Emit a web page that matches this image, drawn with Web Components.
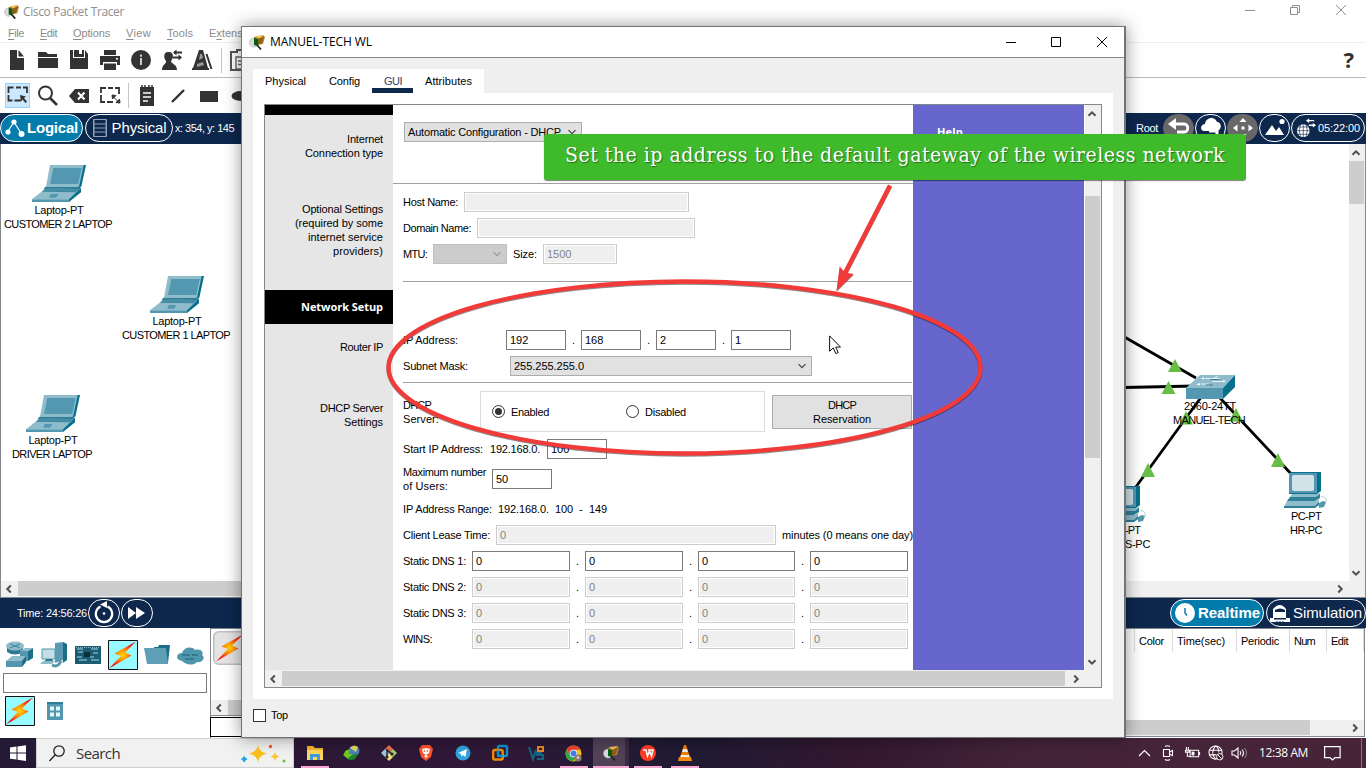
<!DOCTYPE html>
<html lang="en">
<head>
<meta charset="utf-8">
<title>Cisco Packet Tracer</title>
<style>
html,body{margin:0;padding:0}
body{width:1366px;height:768px;overflow:hidden;position:relative;display:flex;flex-direction:column;background:#fff;font:11px/14px "Liberation Sans",Arial,sans-serif;color:#000}
router-dialog{position:absolute;left:241px;top:26px}
callout-note{position:absolute;left:544px;top:134px}
mark-layer{position:absolute;left:0;top:0}
</style>
</head>
<body>
<packet-tracer></packet-tracer>
<task-bar></task-bar>
<router-dialog></router-dialog>
<mark-layer></mark-layer>
<callout-note>Set the ip address to the default gateway of the wireless network</callout-note>
<script>
const def = (name, css, html) => customElements.define(name, class extends HTMLElement {
  connectedCallback() {
    if (this.shadowRoot) return;
    const root = this.attachShadow({mode: 'open'});
    root.innerHTML = `<style>:host,*{box-sizing:border-box}${css}</style>` + (typeof html === 'function' ? html(this) : html);
  }
});

/* ---------- icon set: [viewBox width, viewBox height, markup] ---------- */
const bolt = '<defs><radialGradient id="bg"><stop offset="0" stop-color="#ffd800"/><stop offset=".35" stop-color="#ff9a00"/><stop offset=".75" stop-color="#ff3a10"/><stop offset="1" stop-color="#e81010"/></radialGradient></defs><path d="M28 1.500L6.500 13.500l6.500 2.500L1 28.500 23.500 15.500l-6.500-3z" fill="url(#bg)"/>';
const tracer = '<ellipse cx="5" cy="7.500" rx="4.500" ry="4.500" fill="#dcdcdc" stroke="#aaa" stroke-width=".6"/><path d="M5 2l9-2 2 2-2 7-8 1z" fill="#b9882f"/><path d="M6 1l9-.8-4 4z" fill="#ecc55f"/><path d="M5 3l4 1v7l-4-1z" fill="#075c14"/><path d="M9 4l6-3-2 7-4 2z" fill="#8d5f19"/><path d="M8 10l4 4.500" stroke="#222" stroke-width="1.800"/>';
const ICONS = {
  tracer: [16, 15, tracer],
  doc: [30, 30, '<path d="M8 5h7v8h7v12H8zM16.500 5L22 11.500h-5.500z" fill="#333"/>'],
  open: [30, 30, '<path d="M5 7h8l2 2h9v3H5zM5 13h20v10H5z" fill="#333"/>'],
  save: [30, 30, '<path d="M6 5h3v8h12V5l3 4v15H6zM10 5h5v7h-5zM18 5h2v7h-5V9h3z" fill="#333"/>'],
  print: [30, 30, '<path d="M9 5h12v5H9zM5 11h20v9h-3v-3H8v3H5zM9 18.500h12V25H9z" fill="#333"/><path d="M21 13h2v1.500h-2z" fill="#fff"/>'],
  info: [30, 30, '<circle cx="15" cy="15" r="10" fill="#333"/><path d="M15 9.500v2.200M15 13v7" stroke="#ddd" stroke-width="1.800"/>'],
  user: [30, 30, '<path d="M11 7c6-1 6 6 3 9 0 3 6 3 6 9H5c0-6 5-6 4-9-3-4-2-9 2-9z" fill="#333"/><path d="M17 7.500h8M16 12.500h8" stroke="#333" stroke-width="1.800"/><path d="M16 7.500l3.500-3v6zM25 12.500l-3.500-3v6z" fill="#333"/>'],
  cone: [30, 30, '<path d="M11 5h4l5 18h1v2H4v-2h1z" fill="#333"/><path d="M12 9l2 0 1 4-4 2zM9 19l6-2 1 3-7 2z" fill="#999"/><path d="M18.500 9l5 15" stroke="#333" stroke-width="2"/>'],
  paste: [30, 30, '<path d="M9 7h6V5h6v3h6v17H9z" fill="none" stroke="#555" stroke-width="2"/><path d="M14 12h10v12H14zM16 16h6M16 19.500h6" fill="#fff" stroke="#666" stroke-width="1.400"/>'],
  select: [25, 25, '<path d="M3.500 10V4.500h5M11 4.500h5M18 4.500h4V10M3.500 12v5.500h4M9.500 17.500H16" fill="none" stroke="#333" stroke-width="1.800"/><path d="M15 12l6 1.500-2 1.500 3 3.500-1.500 1.500-3-3.500-1.500 2z" fill="#333"/>'],
  resize: [30, 30, '<path d="M6 12V7h5M13 7h5M20 7h4v6M6 14v7h4M12 21h6" fill="none" stroke="#333" stroke-width="1.800"/><path d="M17 14l4 .5-3.500 3.500zM25 22l-4-.5 3.500-3.500zM18 15.500l6 6" fill="#333" stroke="#333"/>'],
  mag: [30, 30, '<circle cx="12.500" cy="12" r="6.500" fill="none" stroke="#333" stroke-width="2"/><path d="M17 17l7 7" stroke="#333" stroke-width="2.600"/>'],
  del: [30, 30, '<path d="M5 15l6-7h14v14H11z" fill="#333"/><path d="M14 11.500l6.500 7M20.500 11.500l-6.500 7" stroke="#fff" stroke-width="2"/>'],
  note: [30, 30, '<path d="M8 6h14v19H8z" fill="#333"/><path d="M10 4v4M13 4v4M17 4v4M20 4v4" stroke="#333" stroke-width="1.500"/><path d="M11 12h8M11 16h8M11 20h5" stroke="#fff" stroke-width="1.500"/>'],
  line: [30, 30, '<path d="M9 21L21 9" stroke="#333" stroke-width="2.400"/>'],
  rect: [30, 30, '<path d="M6 10h18v11H6z" fill="#333"/>'],
  oval: [30, 30, '<ellipse cx="16" cy="15" rx="9.500" ry="5" fill="#333"/>'],
  topo: [20, 20, '<path d="M3 13L9 4l7 11" fill="none" stroke="#fff" stroke-width="1.200"/><circle cx="3" cy="14" r="2.600" fill="#fff"/><circle cx="9" cy="4" r="2.600" fill="#fff"/><circle cx="16.500" cy="16" r="3" fill="#fff"/>'],
  rack: [16, 20, '<path d="M1.500 1.500h13v17h-13zM1 6h14M1 10h14M1 14h14" fill="none" stroke="#8fa0b8"/><path d="M2.500 1v18M13.500 1v18" stroke="#8fa0b8" stroke-width=".5"/>'],
  undo: [30, 30, '<path d="M7 11h13c5 0 5 8 0 8h-7" fill="none" stroke="#fff" stroke-width="2.800"/><path d="M4 11l8-6v12z" fill="#fff"/>'],
  cloud: [30, 30, '<path d="M8 18c-5-1-3-7 1-7 1-7 10-8 12-2 5 0 5 8 0 9z" fill="#fff"/><path d="M13 18h8v4" stroke="#fff" stroke-width="3" fill="none"/>'],
  move: [30, 30, '<path d="M15 5l3.500 4h-7zM15 25l3.500-4h-7zM5 15l4.500-3.500v7zM25 15l-4.500-3.500v7zM13.500 13.500h3v3h-3z" fill="#fff"/>'],
  image: [30, 30, '<path d="M5 22l7-10 4 6 3-4 5 8z" fill="#fff"/><circle cx="22" cy="8.500" r="2.600" fill="#fff"/>'],
  globe: [22, 24, '<circle cx="8" cy="15" r="7" fill="#fff"/><path d="M1 15h14M2 11h12M2 19h12M8 8v14M5 8.500q-3 6.500 0 13M11 8.500q3 6.500 0 13" stroke="#0d274d" fill="none" stroke-width=".7"/><path d="M13 4h7M14 9h7" stroke="#fff" stroke-width="1.600"/><path d="M11 4l3.500-2.500v5zM22 9l-3.500-2.500v5z" fill="#fff"/>'],
  cycle: [30, 30, '<path d="M11.500 8.500a8.200 8.200 0 1 0 7 0" fill="none" stroke="#fff" stroke-width="2.200"/><path d="M18 3v7l-7-3.500z" fill="#fff"/><circle cx="15" cy="15.500" r="1.300" fill="#fff"/>'],
  ff: [30, 30, '<path d="M6 9l8 6-8 6zM14 9l9 6-9 6z" fill="#fff"/>'],
  clock: [22, 22, '<circle cx="11" cy="11" r="10" fill="#fff"/><path d="M11 6v5l2 2.500" fill="none" stroke="#047cab" stroke-width="1.500"/>'],
  sim: [20, 20, '<path d="M0 19v-4h3V6q7-8 13 0v9h4v4z" fill="#fff"/><path d="M5 7q5-3 10 0v2H5zM4 15h12v1.500H4z" fill="#0d274d"/><path d="M7 18v1.500M10 18v1.500M13 18v1.500" stroke="#0d274d"/>'],
  router: [30, 30, '<path d="M2 6v6q8 5 16 0V6z" fill="#2d7b93"/><ellipse cx="10" cy="6" rx="9" ry="4.500" fill="#8fbccb"/><path d="M5 4l10 4M15 4L5 8" stroke="#3c87a0"/><path d="M15 11h8v10h-8z" fill="#5297ae"/><path d="M23 11l5-3v10l-5 3z" fill="#1c6e88"/><path d="M15 11l5-3h8l-5 3z" fill="#8fbccb"/><path d="M1 21l6-5h14l-4 5z" fill="#8fbccb"/><path d="M1 21h16v6H1z" fill="#5297ae"/><path d="M17 21l4-5v6l-4 5z" fill="#1c6e88"/>'],
  pcs: [30, 30, '<path d="M16 3l8-1v18l-8 3z" fill="#5b9ab3"/><path d="M24 2l4 2v16l-4 3z" fill="#1c6e88"/><path d="M3 9h13v10H3z" fill="#c5dde5" stroke="#5297ae"/><path d="M7 19h6l2 3H5z" fill="#2d7b93"/><path d="M1 24h12l3-3H4z" fill="#8fbccb"/><path d="M13 25q6 3 9-4" fill="none" stroke="#5297ae" stroke-width="3"/>'],
  board: [30, 30, '<path d="M2 6h26v18H2z" fill="#1d5c70"/><path d="M4 9h6M5 12h5M4 17h5M6 20h8M18 9h7M20 13h5M18 20h8M17 17h4" stroke="#6fb0c4" stroke-width="1.500"/><path d="M11 12h6v5h-6z" fill="#0b2e3a"/><path d="M3 7.500h24" stroke="#8fbccb" stroke-dasharray="1 1"/>'],
  bolt: [30, 30, '<path d="M.5.500h29v29H.5z" fill="#97fcff" stroke="#111"/>' + bolt],
  boltgrey: [34, 34, '<rect x=".7" y=".7" width="40" height="32.500" rx="5" fill="#e3e3e3" stroke="#bdbdbd" stroke-width="1.400"/><g transform="translate(2,2)">' + bolt + '</g>'],
  folder: [30, 30, '<path d="M12 7l4 0 1-2h11l-2 18H12z" fill="#1c6e88"/><path d="M2 8h22l2 16H5z" fill="#5f9fb6"/>'],
  cloudb: [30, 30, '<path d="M6 21c-7-1-6-8 0-8 2-6 10-7 13-3 6-2 9 3 7 5 4 3 0 8-5 7-4 4-11 3-15-1z" fill="#4f95ad"/><path d="M6 15h8M9 19h9M16 15h6" stroke="#2d7188" stroke-width="1.500"/>'],
  grid: [16, 20, '<path d="M0 1h16v18H0z" fill="#4e97ae"/><path d="M3 5.500h4v4H3zM9 5.500h4v4H9zM3 11.500h4v4H3zM9 11.500h4v4H9z" fill="#e7f4f8"/><path d="M0 1h16v2H0z" fill="#2f7c94"/>'],
  laptop: [162, 111, '<path d="M54 0h99l-15 65H42z" fill="#8fbccb"/><path d="M153 0h9l-14 65-10 2z" fill="#07718c"/><path d="M64 9h87l-10 48H54z" fill="#5398b0"/><path d="M151 0h4l-14 65h-4z" fill="#8fbccb"/><path d="M40 65h105v8H34z" fill="#2f7f98"/><path d="M42 70l104 3-32 30H0z" fill="#8fbccb"/><path d="M44 69l98 3-13 10-100-2z" fill="#3c88a1"/><path d="M50 73h82M44 77h82" stroke="#8fbccb" stroke-dasharray="3 3"/><path d="M56 87h24l-8 11H52z" fill="#5398b0"/><path d="M0 103h111v8H0z" fill="#5398b0"/><path d="M111 103l36-35v14l-36 29z" fill="#07718c"/>'],
  pc: [44, 36, '<path d="M5 1l3-1h29v19l-4 3H5z" fill="#07718c"/><path d="M5 1h28v20H5z" fill="#5398b0"/><rect x="8" y="3" width="22" height="16" rx="2" fill="#d2e2e9"/><path d="M8 22h25l3-1v2l-3 2H6z" fill="#8fbccb"/><path d="M6 25h26l4-3v4l-5 3H3z" fill="#2f7f98"/><path d="M3 29h29l3-2v3l-4 5H0z" fill="#8fbccb"/><path d="M0 34h31l4-4v3l-4 3H0z" fill="#2f7f98"/><path d="M35 31l4-2 3 1-2 5-5 1z" fill="#5398b0"/><path d="M37 24q7 2 5 6" fill="none" stroke="#b9cdd5"/>'],
  switch: [49, 24, '<path d="M14 0h35L37 13H0z" fill="#8fbccb"/><path d="M0 13h37v11H0z" fill="#5398b0"/><path d="M37 13L49 0v12L37 24z" fill="#07718c"/><path d="M19 3.500h15M15 9h8M26 6.500h11M28 3l4-2" stroke="#e8f2f5" stroke-width="1"/><path d="M14 8l-4 1.500 4 1zM37 5l3 1-3 1.500zM18 2l-3 1.500 3 1z" fill="#fff"/><path d="M24 4.500h10M20 10h7" stroke="#20728b" stroke-width=".8"/>'],
  win: [16, 16, '<path d="M0 2.500l6.500-.9v6H0zM7.500 1.500L16 .3v7.300H7.500zM0 8.600h6.500v6L0 13.700zM7.500 8.600H16V16l-8.500-1.200z" fill="#fff"/>'],
  wmag: [16, 17, '<circle cx="10" cy="6" r="5.200" fill="none" stroke="#222" stroke-width="1.300"/><path d="M6.300 9.700L.5 16" stroke="#222" stroke-width="1.400"/>'],
  stars: [46, 22, '<path d="M18 3q1 7 9 8.500-8 1.500-9 9-1-7.500-9-9Q17 10 18 3z" fill="#fcc01e"/><path d="M10 11.500q6-.5 8-6 2 5.500 8 6-6 1-8 6-2-5-8-6z" fill="#fcc01e"/><path d="M35 10q.5 3.500 4.500 4.500-4 1-4.500 4.500-.5-3.500-4.500-4.500 4-1 4.500-4.500z" fill="#fcc534"/><path d="M4 14.500q1 2 3 2.500-2 1-3 3-.5-2-2.500-3 2-.5 2.500-2.500z" fill="#1aa3e8" stroke="#1aa3e8"/><circle cx="30.500" cy="4.500" r="1.700" fill="#e9592c"/><circle cx="44" cy="19" r="1.600" fill="#7ac143"/>'],
  explorer: [18, 16, '<path d="M1 1h6l2 2h8v12H1z" fill="#f0b429"/><path d="M1 5h16v10H1z" fill="#ffd75e"/><path d="M4 15V9h10v6h-3v-3H7v3z" fill="#3f9ce0"/>'],
  idm: [18, 16, '<circle cx="11" cy="6" r="5.500" fill="#4b7fc4"/><path d="M7 3q4-4 8-1l-2 5z" fill="#dcd95b"/><path d="M1 9q1-5 6-4l-1 4h4l-5 5-5-4z" fill="#6ecb1e"/><path d="M9 10l7-2-4 6q-5 2-8 0z" fill="#20832d"/>'],
  git: [16, 16, '<path d="M8 0l4 4-4 4-4-4z" fill="#f06a4d"/><path d="M4 4l4 4-4 4-4-4z" fill="#95c8ef"/><path d="M12 4l4 4-4 4-4-4z" fill="#a6ce73"/><path d="M8 8l4 4-4 4-4-4z" fill="#f3d98a"/><path d="M6 4v8M6 5l5 4" stroke="#222" stroke-width="1.400"/><circle cx="6" cy="12" r="1.500" fill="#222"/><circle cx="11" cy="9" r="1.500" fill="#222"/>'],
  brave: [14, 16, '<path d="M3 0h8l3 4-2 8-5 4-5-4L0 4z" fill="#fb542b"/><path d="M3 4l4-1 4 1-1 4-3 2-3-2zM5 11l2-1 2 1-2 2z" fill="#fff"/><path d="M5 5l1 2M9 5L8 7" stroke="#fb542b"/>'],
  telegram: [16, 16, '<circle cx="8" cy="8" r="7.500" fill="#2fa3dd"/><path d="M3 8l9-4-1.500 8-3-2-1 2-.5-3z" fill="#fff"/>'],
  vmware: [16, 16, '<rect x="6" y="1" width="9" height="10" rx="1.500" fill="none" stroke="#0d92c9" stroke-width="2.400"/><rect x="1.200" y="5" width="9.500" height="9.500" rx="1.500" fill="none" stroke="#f38b00" stroke-width="2.400"/><path d="M6 5v6h5" fill="none" stroke="#0d92c9" stroke-width="2.200"/>'],
  vs: [17, 16, '<path d="M1 2l4 12 3-9M14 8H9v2h6v4H9" fill="none" stroke="#126482" stroke-width="2.200"/><path d="M10 2h5v4h-5z" fill="none" stroke="#e68a25" stroke-width="2"/>'],
  chrome: [17, 17, '<circle cx="8.500" cy="8.500" r="8" fill="#fbc116"/><path d="M8.500.5a8 8 0 0 1 7 4.200H8.500L5 10.500 1.500 4.800A8 8 0 0 1 8.500.5z" fill="#ea4335"/><path d="M1.500 4.700a8 8 0 0 0 6.500 11.800l4-6H5z" fill="#2fa64e"/><circle cx="8.500" cy="8.500" r="3.800" fill="#fff"/><circle cx="8.500" cy="8.500" r="3" fill="#3f80ee"/><circle cx="13" cy="13" r="3.600" fill="#8b7768"/><circle cx="13" cy="12.500" r="1.300" fill="#ddd"/>'],
  wps: [16, 16, '<circle cx="8" cy="8" r="8" fill="#ff3c24"/><path d="M3 5h3l1.500 6L9.500 6l2 5L13 5H8" fill="none" stroke="#fff" stroke-width="1.500"/>'],
  vlc: [14, 16, '<path d="M6 0h2l4 12H2z" fill="#f57c00"/><path d="M5 4h4l1 3H4zM3 10h8l.500 2h-9z" fill="#eee"/><path d="M1 12h12l1 4H0z" fill="#f58a10"/>'],
  up: [13, 8, '<path d="M1 7l5.500-5.500L12 7" fill="none" stroke="#fff" stroke-width="1.200"/>'],
  cam: [12, 16, '<path d="M1.500 4.500h6v7h-6zM7.500 7l3-1.500v5L7.500 9M3 1.500q2.500-1.500 5 0M3 14.500q2.500 1.500 5 0" fill="none" stroke="#fff" stroke-width="1.100"/>'],
  battery: [17, 14, '<path d="M5.500 4.500h9v7h-9zM15.500 6.500v3M3.500 1v3M1.500 1v3M.5 4.500h4v2h-4zM2.500 7v4h3" fill="none" stroke="#fff" stroke-width="1.100"/><path d="M7 6h3v4H7z" fill="#fff"/>'],
  net: [17, 17, '<circle cx="8" cy="8" r="7" fill="none" stroke="#fff" stroke-width="1.100"/><path d="M1 5.500h14M1 10.500h8M8 1q-6 7 0 14M8 1q4 3 3.500 7" fill="none" stroke="#fff" stroke-width="1.100"/><circle cx="12.500" cy="12.500" r="3.400" fill="#422034" stroke="#fff"/><path d="M10.500 10.500l4 4" stroke="#fff"/>'],
  vol: [17, 14, '<path d="M1 5h2.500L7 2v10L3.500 9H1z" fill="none" stroke="#fff" stroke-width="1.100"/><path d="M9 5q1.500 2 0 4M11 3.500q3 3.500 0 7" fill="none" stroke="#fff" stroke-width="1.100"/><path d="M13.500 2q4 5 0 10" fill="none" stroke="#99889a"/>'],
  notif: [17, 16, '<path d="M.6 1.600h15.500v11H11L8.500 15 6 12.600H.6z" fill="none" stroke="#fff" stroke-width="1.200"/>']
};

def('x-icon', ':host{display:block;flex:none}svg{display:block;overflow:visible}', el => {
  const [w, h, body] = ICONS[el.getAttribute('name')];
  const ow = el.getAttribute('w') || w, oh = ow * h / w;
  return `<svg width="${ow}" height="${oh}" viewBox="0 0 ${w} ${h}">${body}</svg>`;
});

/* Chevron used by the scroll bars and the combo boxes */
const turn = {up: 0, right: 90, down: 180, left: 270};
def('x-arrow', ':host{display:grid;place-items:center;width:16px;height:17px;flex:none}svg{display:block;transform:translateX(-1px)}', el =>
  `<svg width="10" height="10" viewBox="0 0 10 10"><path d="M1.500 6.800L5 3.300l3.500 3.500" transform="rotate(${turn[el.getAttribute('dir')]} 5 5)" fill="none" stroke="${el.getAttribute('color') || '#505050'}" stroke-width="${el.getAttribute('sw') || 2}"/></svg>`);

/* Scroll bar: pre = gap before the thumb, size = thumb length */
def('x-scroll', `:host{display:flex;background:#f0f0f0;flex:none}
  :host([axis=v]){flex-direction:column;width:16px}
  i{display:block;background:#cdcdcd;flex:none}
  x-arrow:last-child{margin-top:auto}
  :host([axis=h]) x-arrow:last-child{margin:0 0 0 auto}
  :host([axis=h]) x-arrow{height:16px;width:17px}`, el => {
  const v = el.getAttribute('axis') === 'v', p = el.getAttribute('pre'), s = el.getAttribute('size');
  return `<x-arrow dir="${v ? 'up' : 'left'}"></x-arrow><i style="${v ? `width:15px;height:${s}px;margin-top:${p}px` : `height:15px;width:${s}px;margin-left:${p}px`}"></i><x-arrow dir="${v ? 'down' : 'right'}"></x-arrow>`;
});

def('x-pill', `:host{display:flex;align-items:center;justify-content:center;flex:none;border:1px solid #fff;border-radius:14px;height:28px;color:#fff;white-space:nowrap;overflow:hidden}
  :host([on]){background:#047cab;font-weight:bold}
  :host([off]){background:#686868;border-color:#686868}`, '<slot></slot>');

/* ---------- main window ---------- */
def('device-node', `:host{position:absolute;width:120px;display:flex;flex-direction:column;align-items:center}
  x-icon{margin-bottom:var(--gap,1px)}`, el => `<x-icon name="${el.getAttribute('kind')}" w="${el.getAttribute('iw')}"></x-icon><slot></slot>`);

def('title-row', `:host{display:flex;height:24px;align-items:center;padding-left:4px;color:#8e8e8e;font:12px/16px "Open Sans","Noto Sans",sans-serif;background:#fff;flex:none}
  fit-text{margin-left:4px} .b{margin:-4px 19px 0 auto;flex:none}`,
  `<x-icon name="tracer" w="15"></x-icon><fit-text w="101">Cisco Packet Tracer</fit-text>
  <svg class="b" width="102" height="12" viewBox="0 0 102 12" fill="none" stroke="#8e8e8e"><path d="M0 6.500h10M45.500 3.500h7v7h-7zM47.500 3V1.500h7v7H53M91 1l10 10M101 1L91 11"/></svg>`);

def('menu-row', `:host{display:flex;height:19px;align-items:center;padding-left:8px;gap:16px;color:#8b8b8b;border-bottom:1px solid #efefef;font-size:11px;flex:none}
  u{text-underline-offset:2px}`,
  `<fit-text w="16"><u>F</u>ile</fit-text><fit-text w="17"><u>E</u>dit</fit-text><fit-text w="37"><u>O</u>ptions</fit-text><fit-text w="25"><u>V</u>iew</fit-text><fit-text w="26"><u>T</u>ools</fit-text><span>E<u>x</u>tens</span>`);

def('tool-row', `:host{display:flex;align-items:center;gap:1px;padding-left:2px;height:35px;background:#fff;flex:none}
  hr{width:1px;height:25px;border:0;background:#c4c4c4;margin:0 2px}
  .sel{width:25px;height:25px;margin:0 2px 0 3px;background:#cce8ff;box-shadow:inset 0 0 0 1px #99d1ff}
  b{margin-left:auto;font:bold 22px/24px "Noto Sans",sans-serif;color:#333;padding:0 12px 2px 0}`,
  el => el.hasAttribute('second')
    ? `<x-icon class="sel" name="select"></x-icon><x-icon name="mag"></x-icon><x-icon name="del"></x-icon><x-icon name="resize"></x-icon><hr><x-icon name="note"></x-icon><x-icon name="line"></x-icon><x-icon name="rect"></x-icon><x-icon name="oval"></x-icon>`
    : `<x-icon name="doc"></x-icon><x-icon name="open"></x-icon><x-icon name="save"></x-icon><x-icon name="print"></x-icon><x-icon name="info"></x-icon><x-icon name="user"></x-icon><x-icon name="cone"></x-icon><hr><x-icon name="paste" style="margin-left:-3px"></x-icon><b>?</b>`);

def('mode-bar', `:host{display:flex;align-items:center;height:31px;background:#0d274d;color:#fff;gap:1px;flex:none;padding-bottom:1px}
  .l{font-size:15px}.g{margin-left:auto}x-pill x-icon{margin-right:2px}x-pill.i x-icon{margin:0}`,
  `<x-pill on style="width:83px"><x-icon name="topo"></x-icon><fit-text class="l" w="51">Logical</fit-text></x-pill>
  <x-pill style="width:88px;margin-left:1px"><x-icon name="rack" style="margin-right:4px"></x-icon><fit-text class="l" w="55">Physical</fit-text></x-pill>
  <fit-text w="59" style="margin-left:1px">x: 354, y: 145</fit-text>
  <fit-text class="g" w="22" style="margin-right:4px">Root</fit-text>
  <x-pill class="i" off style="width:31px"><x-icon name="undo"></x-icon></x-pill>
  <x-pill class="i" style="width:31px"><x-icon name="cloud"></x-icon></x-pill>
  <x-pill class="i" off style="width:31px"><x-icon name="move"></x-icon></x-pill>
  <x-pill class="i" style="width:31px"><x-icon name="image"></x-icon></x-pill>
  <x-pill style="width:74px;margin-right:1px"><x-icon name="globe" w="20"></x-icon><fit-text w="42">05:22:00</fit-text></x-pill>`);

def('topology-canvas', `:host{display:flex;flex-direction:column;height:454px;border:1px solid #828790;border-width:0 1px 1px;flex:none}
  .top{display:flex;height:437px}.c{flex:1;position:relative;background:#fff;overflow:hidden}
  svg{position:absolute;left:-1px;top:-144px}
  .part{position:absolute;left:1100px;top:379px;width:50px;display:flex;flex-direction:column;align-items:flex-end}`,
  `<div class="top"><div class="c">
    <svg width="1350" height="600" viewBox="0 0 1350 600"><path d="M1100 323l96 55M1100 388l95-2M1202 396l-80 110M1220 398l75 80" stroke="#000" stroke-width="2.800"/>
    <g fill="#67bd45"><path d="M1175 359l7 13h-14zM1168.500 381l7 13h-14zM1186 411l7 13.500h-14zM1236 408l7 13.500h-14zM1148 463l7 14h-14zM1278 453l7 14h-14z"/></g></svg>
    <device-node kind="laptop" iw="54" style="left:-2px;top:21px"><fit-text w="49">Laptop-PT</fit-text><fit-text w="108" style="margin-right:2px">CUSTOMER 2 LAPTOP</fit-text></device-node>
    <device-node kind="laptop" iw="54" style="left:116px;top:132px"><fit-text w="49">Laptop-PT</fit-text><fit-text w="108" style="margin-right:2px">CUSTOMER 1 LAPTOP</fit-text></device-node>
    <device-node kind="laptop" iw="54" style="left:-8px;top:251px"><fit-text w="49">Laptop-PT</fit-text><fit-text w="80" style="margin-right:2px">DRIVER LAPTOP</fit-text></device-node>
    <device-node kind="switch" iw="49" style="left:1149px;top:231px;--gap:0px"><fit-text w="52">2960-24TT</fit-text><fit-text w="72" style="margin-right:2px">MANUEL-TECH</fit-text></device-node>
    <device-node kind="pc" iw="44" style="left:1245px;top:328px"><fit-text w="30">PC-PT</fit-text><fit-text w="32">HR-PC</fit-text></device-node>
    <device-node kind="pc" iw="44" style="left:1064px;top:342px"></device-node>
    <div class="part"><fit-text w="15" style="margin-right:11px">-PT</fit-text><fit-text w="25" style="margin-right:1px">S-PC</fit-text></div>
  </div><x-scroll axis="v" pre="0" size="43"></x-scroll></div>
  <x-scroll axis="h" pre="0" size="1000" style="padding-right:16px;height:16px"></x-scroll>`);

def('time-bar', `:host{display:flex;align-items:center;height:30px;background:#0d274d;color:#fff;gap:1px;padding-left:17px;flex:none}
  .l{font-size:15px}x-pill x-icon{margin-right:2px}.w x-icon{margin-right:0}`,
  `<fit-text w="70">Time: 24:56:26</fit-text><x-pill class="w" style="width:32px"><x-icon name="cycle"></x-icon></x-pill><x-pill class="w" style="width:32px"><x-icon name="ff"></x-icon></x-pill>
  <x-pill on style="width:94px;margin-left:auto"><x-icon name="clock"></x-icon><fit-text class="l" w="62">Realtime</fit-text></x-pill>
  <x-pill style="width:100px;margin-left:1px"><x-icon name="sim" style="margin-right:3px"></x-icon><fit-text class="l" w="69">Simulation</fit-text></x-pill>`);

def('device-shelf', `:host{display:flex;height:110px;background:#fff;flex:none}
  .a{width:210px;display:flex;flex-direction:column;padding:12px 0 0 3px}
  .r{display:flex;gap:4px;padding-left:2px;height:30px}
  input{width:204px;height:20px;margin:3px 0;border:1px solid #7a7a7a;padding:0;display:block;background:#fff}
  .m{width:500px;border-left:1px solid #828790;display:flex;flex-direction:column}
  .p{height:72px;padding:2px 0 0 2px;border-top:1px solid #828790}
  .k{height:20px;border:1px solid #000;margin-left:-1px;margin-top:1px}
  .t{margin-left:auto;width:266px;height:109px;border:1px solid #828790;margin-right:1px;display:flex;flex-direction:column}
  .h{display:flex;height:23px;align-items:stretch;margin-left:auto}
  .h fit-text{border-left:1px solid #dcdcdc;padding:5px 0 0 4px;}
  .t x-scroll{margin-top:auto;height:16px}`,
  `<div class="a"><div class="r"><x-icon name="router"></x-icon><x-icon name="pcs"></x-icon><x-icon name="board"></x-icon><x-icon name="bolt" style="margin-left:1px"></x-icon><x-icon name="folder"></x-icon><x-icon name="cloudb"></x-icon></div><input><div class="r" style="align-items:center;gap:12px"><x-icon name="bolt"></x-icon><x-icon name="grid"></x-icon></div></div>
  <div class="m"><div class="p"><x-icon name="boltgrey"></x-icon></div><x-scroll axis="h" pre="0" size="300" style="height:16px;border-bottom:1px solid #828790"></x-scroll><div class="k"></div></div>
  <div class="t"><div class="h"><fit-text box="38" w="25">Color</fit-text><fit-text box="64" w="48">Time(sec)</fit-text><fit-text box="53" w="38">Periodic</fit-text><fit-text box="37" w="21">Num</fit-text><fit-text box="37" w="17">Edit</fit-text><i style="border-left:1px solid #dcdcdc"></i></div><x-scroll axis="h" pre="0" size="193"></x-scroll></div>`);

def('packet-tracer', ':host{display:flex;flex-direction:column;height:738px;flex:none;overflow:hidden}',
  `<title-row></title-row><menu-row></menu-row><tool-row style="border-bottom:1px solid #b9b9b9"></tool-row><tool-row second></tool-row><mode-bar></mode-bar><topology-canvas></topology-canvas><time-bar></time-bar><device-shelf></device-shelf>`);

/* ---------- task bar ---------- */
def('task-item', `:host{display:flex;width:37px;height:30px;align-items:center;justify-content:center;position:relative;flex:none}
  :host([run])::after{content:"";position:absolute;left:4px;width:28px;bottom:0;height:2px;background:#f9a9d2}
  :host([active])::before{content:"";position:absolute;left:0;width:36px;top:0;height:30px;background:#514258;box-shadow:inset -4px 0 #3b2b43}
  :host([active])::after{left:0;width:36px}
  x-icon{position:relative;margin-right:2px}`, el => `<x-icon name="${el.getAttribute('name')}"></x-icon>`);
def('task-bar', `:host{display:flex;height:30px;width:1366px;flex:none;color:#fff;background:linear-gradient(90deg,#241a35 0,#2c1836 280px,#301838 500px,#211b34 640px,#201a33 700px,#33182f 860px,#43233a 1020px,#482438 1366px);align-items:stretch}
  .w{width:36px;display:grid;place-items:center}
  .s{width:258px;background:#f1f1f1;border:1px solid #d0d0d0;display:flex;align-items:center;padding-left:12px;color:#333;font:15px/20px "Open Sans","Noto Sans",sans-serif}
  .tr{margin-left:auto;display:flex;align-items:center;gap:8px;padding-right:4px;font:12px/16px "Open Sans","Noto Sans",sans-serif}
  .end{width:1px;height:30px;background:#85717e;margin-left:12px}`,
  `<div class="w"><x-icon name="win"></x-icon></div><div class="s"><x-icon name="wmag"></x-icon><fit-text w="44" style="margin-left:11px">Search</fit-text><x-icon name="stars" style="margin:0 7px 0 auto"></x-icon></div>
  <div style="display:flex;margin-left:3px"><task-item run name="explorer"></task-item><task-item name="idm"></task-item><task-item name="git"></task-item><task-item name="brave"></task-item><task-item name="telegram"></task-item><task-item name="vmware"></task-item><task-item name="vs"></task-item><task-item run name="chrome"></task-item><task-item run active name="tracer"></task-item><task-item run name="wps"></task-item><task-item run name="vlc"></task-item></div>
  <div class="tr"><x-icon name="up" style="margin-right:3px"></x-icon><x-icon name="cam" style="margin-right:3px"></x-icon><x-icon name="battery" w="16" style="margin-right:-1px"></x-icon><x-icon name="net" w="16" style="margin-right:-1px"></x-icon><x-icon name="vol" w="17"></x-icon><fit-text w="49" style="margin:0 8px 0 3px">12:38 AM</fit-text><x-icon name="notif"></x-icon><span class="end"></span></div>`);

/* ---------- form controls ---------- */
def('x-field', `:host{display:block;flex:none;height:20px;border:1px solid #7a7a7a;background:#fff;padding:2px 0 0 3px;line-height:14px}
  :host([off]){border-color:#ccc;background:#efefef;box-shadow:inset 0 0 0 1px #fff;color:#838383}`, '<slot></slot>');
def('x-combo', `:host{display:flex;align-items:center;flex:none;height:20px;border:1px solid #adadad;background:#e1e1e1;padding-left:3px}
  :host([off]){background:#ccc;border-color:#bfbfbf}x-arrow{margin-left:auto}`,
  el => `<slot></slot><x-arrow dir="down" sw="1.200" color="${el.hasAttribute('off') ? '#999' : '#444'}"></x-arrow>`);
def('x-radio', `:host{display:flex;align-items:center;gap:6px}i{width:13px;height:13px;border:1px solid #333;border-radius:50%;display:grid;place-items:center;background:#fff}
  :host([on]) i::after{content:"";width:7px;height:7px;border-radius:50%;background:#333}`, '<i></i><slot></slot>');

/* Four dotted values, the width of each cell given as a list */
def('ip-row', `:host{display:flex;align-items:center}
  span{width:15px;text-align:center}`, el => {
  const off = el.hasAttribute('off') ? 'off' : '';
  const ws = el.getAttribute('cells').split(' ');
  return el.getAttribute('values').split(' ').map((v, i) => `<x-field ${off} style="width:${ws[i]}px">${v}</x-field>`).join('<span>.</span>');
});

/* ---------- router dialog ---------- */
def('side-nav', `:host{display:flex;flex-direction:column;width:128px;background:#e6e6e6;text-align:right;flex:none}
  div{display:flex;flex-direction:column;align-items:flex-end;padding-right:10px;flex:none}
  .k{background:#000;color:#fff;font-weight:bold}`,
  `<div class="k" style="height:10px"></div>
  <div style="height:175px;padding-top:17px"><fit-text w="36">Internet</fit-text><fit-text w="78">Connection type</fit-text>
   <fit-text w="81" style="margin-top:42px">Optional Settings</fit-text><fit-text w="88">(required by some</fit-text><fit-text w="75">internet service</fit-text><fit-text w="50">providers)</fit-text></div>
  <div class="k" style="height:34px;justify-content:center"><fit-text w="82" style="font-family:'Open Sans','Noto Sans',sans-serif">Network Setup</fit-text></div>
  <div style="padding-top:16px"><fit-text w="43">Router IP</fit-text><fit-text w="63" style="margin-top:47px">DHCP Server</fit-text><fit-text w="39">Settings</fit-text></div>`);

const dns = (label, lw, off) => `<div class="r" style="margin-top:6px"><fit-text w="${lw}" style="margin-right:${69 - lw}px">${label}</fit-text><ip-row ${off} cells="98 98 97 98" values="0 0 0 0"></ip-row></div>`;
def('setup-form', `:host{display:flex;flex-direction:column;width:520px;background:#fff;padding:17px 0 0 10px;flex:none}
  .r{display:flex;height:20px;align-items:center;flex:none}
  hr{height:1px;border:0;background:#a0a0a0;margin:0;width:509px;flex:none}
  .box{width:285px;height:41px;border:1px solid #dcdcdc;display:flex;align-items:center;padding-left:11px;flex:none}
  button{width:140px;height:34px;border:1px solid #adadad;background:#e1e1e1;font:inherit;color:#000;padding:0;display:flex;flex-direction:column;align-items:center;justify-content:center;margin-left:7px;flex:none}`,
  `<x-combo style="width:178px;margin-left:1px"><fit-text w="153">Automatic Configuration - DHCP</fit-text></x-combo>
  <hr style="margin:41px 0 0 -10px;width:520px">
  <div class="r" style="margin-top:8px"><fit-text w="55">Host Name:</fit-text><x-field off style="width:225px;margin-left:6px"></x-field></div>
  <div class="r" style="margin-top:6px"><fit-text w="68">Domain Name:</fit-text><x-field off style="width:218px;margin-left:6px"></x-field></div>
  <div class="r" style="margin-top:6px"><fit-text w="24">MTU:</fit-text><x-combo off style="width:74px;margin:0 6px"></x-combo><fit-text w="24">Size:</fit-text><x-field off style="width:74px;margin-left:6px">1500</x-field></div>
  <hr style="margin-top:17px">
  <div class="r" style="margin-top:48px"><fit-text w="55">IP Address:</fit-text><ip-row style="margin-left:48px" cells="60 60 60 60" values="192 168 2 1"></ip-row></div>
  <div class="r" style="margin-top:6px"><fit-text w="65">Subnet Mask:</fit-text><x-combo style="width:302px;margin-left:42px"><fit-text w="70">255.255.255.0</fit-text></x-combo></div>
  <hr style="margin-top:6px">
  <div class="r" style="margin-top:8px;height:41px"><div style="width:77px;height:28px;margin-top:1px"><fit-text w="28">DHCP</fit-text><br><fit-text w="36">Server:</fit-text></div><div class="box"><x-radio on><fit-text w="38">Enabled</fit-text></x-radio><x-radio style="margin-left:77px"><fit-text w="41">Disabled</fit-text></x-radio></div><button><fit-text w="28">DHCP</fit-text><fit-text w="58">Reservation</fit-text></button></div>
  <div class="r" style="margin-top:7px"><fit-text w="80">Start IP Address:</fit-text><fit-text w="50" style="margin:0 7px">192.168.0.</fit-text><x-field style="width:60px">100</x-field></div>
  <div class="r" style="margin-top:10px"><div style="width:89px;height:28px"><fit-text w="83">Maximum number</fit-text><br><fit-text w="45">of Users:</fit-text></div><x-field style="width:60px">50</x-field></div>
  <div class="r" style="margin-top:10px"><fit-text w="89">IP Address Range:</fit-text><fit-text w="51" style="margin:0 6px">192.168.0.</fit-text><fit-text w="18">100</fit-text><fit-text w="4" style="margin:0 6px">-</fit-text><fit-text w="18">149</fit-text></div>
  <div class="r" style="margin-top:6px"><fit-text w="87">Client Lease Time:</fit-text><x-field off style="width:280px;margin:0 6px">0</x-field><fit-text w="131">minutes (0 means one day)</fit-text></div>
  ${dns('Static DNS 1:', 63, '')}${dns('Static DNS 2:', 63, 'off')}${dns('Static DNS 3:', 63, 'off')}${dns('WINS:', 29, 'off')}`);

def('tab-strip', `:host{display:flex;width:231px;height:24px;background:#fff;padding-left:12px}
  fit-text{padding-top:5px;flex:none}
  .on{color:#2b4468;padding:5px 0 0 12px;margin:0 12px;box-shadow:inset 0 -5px #0d274d}`,
  `<fit-text w="41" style="margin-right:23px">Physical</fit-text><fit-text w="31">Config</fit-text><fit-text class="on" box="41" w="18">GUI</fit-text><fit-text w="47">Attributes</fit-text>`);

def('router-dialog', `:host{display:flex;flex-direction:column;width:885px;height:712px;border:1px solid #707378;border-right-width:2px;background:#efefef;box-shadow:0 0 16px rgba(0,0,0,.42)}
  .t{height:31px;background:#fff;border-bottom:1px solid #828790;display:flex;align-items:center;padding-left:7px;font:12px/16px "Open Sans","Noto Sans",sans-serif;flex:none}
  .t fit-text{margin-left:5px}.t svg{margin:-1px 17px 0 auto}
  .body{display:flex;flex-direction:column;padding:11px 11px 0;flex:none}
  .panel{background:#fff;width:860px;height:606px;padding:11px}
  .f{width:838px;height:584px;border:1px solid #828790;display:flex;flex-direction:column;background:#f0f0f0}
  .v{display:flex;height:566px;flex:none}.v>*{height:565px}
  .help{width:171px;background:#66c;color:#fff;font:bold 11px/14px "Open Sans",sans-serif;padding:20px 0 0 24px;flex:none}
  .foot{display:flex;align-items:center;height:32px;padding-left:11px;gap:5px}.foot i{width:13px;height:13px;border:1px solid #333;background:#fff}`,
  `<div class="t"><x-icon name="tracer" w="16"></x-icon><fit-text w="102">MANUEL-TECH WL</fit-text><svg width="101" height="12" viewBox="0 0 101 12" fill="none" stroke="#000"><path d="M0 6.500h10M45.500 1.500h9v9h-9zM91 1l10 10M101 1L91 11"/></svg></div>
  <div class="body"><tab-strip></tab-strip><div class="panel"><div class="f">
   <div class="v"><side-nav></side-nav><setup-form></setup-form><div class="help"><fit-text w="26">Help</fit-text></div><x-scroll axis="v" pre="74" size="262" style="border-left:1px solid #fff;width:17px"></x-scroll></div>
   <x-scroll axis="h" pre="0" size="783" style="height:16px;padding-right:16px"></x-scroll></div></div></div>
  <div class="foot"><i></i><fit-text w="17">Top</fit-text></div>`);

/* ---------- annotations ---------- */
def('callout-note', `:host{display:flex;align-items:center;justify-content:center;width:702px;height:46px;background:#3eba2b;border-radius:3px;box-shadow:0 1px 1px rgba(0,0,0,.5);color:#fff;font:21px/30px "DejaVu Serif Condensed","DejaVu Serif",serif;text-shadow:1px 1px 1px rgba(0,0,0,.4);padding-bottom:5px}`,
  el => `<fit-text w="660">${el.textContent}</fit-text>`);
def('mark-layer', ':host{display:block}svg{display:block;filter:drop-shadow(0 1px .5px rgba(0,0,0,.45))}',
  `<svg width="1366" height="768" viewBox="0 0 1366 768"><ellipse cx="684.500" cy="367.500" rx="296" ry="86" fill="none" stroke="#f23b39" stroke-width="4.300"/>
  <path d="M890 185.500L844 275" stroke="#f23b39" stroke-width="4.500"/><path d="M836.500 291l3.200-24.500 5.300 6 8.700 1.500z" fill="#f23b39"/></svg>
  <svg width="14" height="20" viewBox="0 0 14 20" style="position:absolute;left:829px;top:335px;filter:none"><path d="M.6.900v15.400l3.600-3.400 2.600 5.700 2.400-1-2.500-5.500h4.800z" fill="#fff" stroke="#111"/></svg>`);

/* Text set to an exact width by letter spacing; registered last so that fonts are inherited */
customElements.define('fit-text', class extends HTMLElement {
  connectedCallback() {
    if (this.shadowRoot) return;
    const root = this.attachShadow({mode: 'open'});
    root.innerHTML = '<style>:host{display:inline-block;white-space:pre;flex:none;box-sizing:border-box;vertical-align:top}span{display:inline-block}</style><span><slot></slot></span>';
    const s = root.querySelector('span'), w = +this.getAttribute('w'), box = +this.getAttribute('box') || w;
    s.style.letterSpacing = (w - s.getBoundingClientRect().width) / this.textContent.length + 'px';
    this.style.width = box + 'px';
  }
});
</script>
</body>
</html>
